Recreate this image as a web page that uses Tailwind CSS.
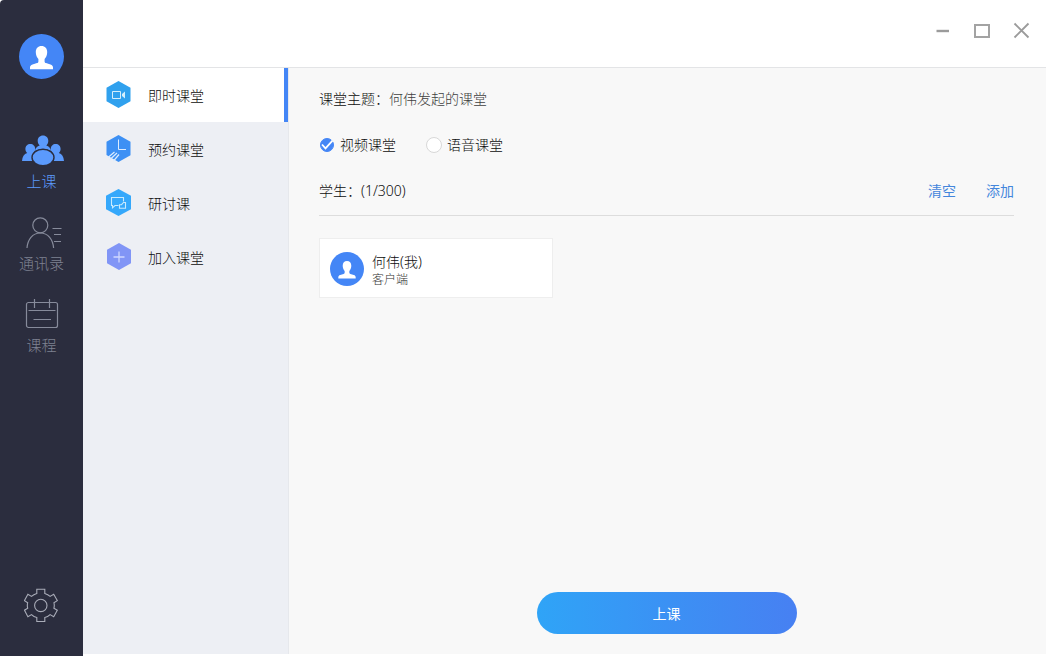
<!DOCTYPE html>
<html lang="zh-CN">
<head>
<meta charset="utf-8">
<meta name="viewport" content="width=device-width, initial-scale=1">
<title>即时课堂</title>
<script src="https://cdn.jsdelivr.net/npm/@tailwindcss/browser@4"></script>
</head>
<body class="flex h-screen overflow-hidden bg-white font-['Noto_Sans','Noto_Sans_CJK_SC',sans-serif] text-sm font-light text-[#0c0c0c]">
  <svg class="hidden" aria-hidden="true">
    <symbol id="avatar" viewBox="0 0 45 45">
      <circle cx="22.5" cy="22.5" r="22.5" fill="#4486f6"/>
      <path fill="#fff" d="M22.500 12c3.600 0 5.700 2.500 5.700 6.200 0 3-1.200 5.300-2.600 6.800v2.400c0 .9.500 1.400 1.400 1.700l4.500 1.300c1.700.5 2.500 1.600 2.500 3.200v1.600H11v-1.600c0-1.600.8-2.700 2.500-3.200l4.500-1.300c.9-.3 1.400-.8 1.400-1.700V25c-1.400-1.500-2.600-3.800-2.600-6.800 0-3.700 2.100-6.200 5.700-6.200z"/>
    </symbol>
  </svg>

  <aside class="flex w-[83px] shrink-0 flex-col items-center rounded-tl-sm bg-[#2b2d3e] pt-[34px] pb-8 text-[15px] leading-5">
    <button type="button" aria-label="个人资料"><svg class="size-[45px]"><use href="#avatar"/></svg></button>
    <nav class="mt-[54px] flex flex-1 flex-col items-center gap-6 text-[#7f8292]">
      <a href="#class" class="flex flex-col items-center gap-1 text-[#5b9afc]">
        <svg class="ml-[3px] h-[34px] w-[42px]" viewBox="0 -2 42 34" fill="currentColor">
          <path d="M21 .5c3.200 0 5.300 2.300 5.300 5.300 0 1.900-.8 3.600-2 4.600 2.700.8 4.300 2.500 4.800 5.600-2.300-1.400-5-2.100-8.100-2.100s-5.800.7-8.100 2.100c.5-3.100 2.100-4.800 4.800-5.600-1.200-1-2-2.700-2-4.600C15.700 2.800 17.800.5 21 .5z"/>
          <path d="M8.300 9c2.800 0 4.900 2.100 4.900 4.900 0 1.600-.7 3.200-1.800 4.200l1.200.6c-1.700 1.500-2.600 3.300-2.600 5.300 0 .7.100 1.300.3 2H0c.4-4.100 1.900-6.800 5.200-7.900-1.100-1-1.800-2.600-1.800-4.200C3.400 11.100 5.500 9 8.300 9z"/>
          <path d="M33.700 9c-2.800 0-4.900 2.100-4.900 4.900 0 1.600.7 3.200 1.800 4.200l-1.200.6c1.700 1.500 2.600 3.300 2.600 5.300 0 .7-.1 1.300-.3 2H42c-.4-4.100-1.900-6.800-5.200-7.900 1.100-1 1.800-2.600 1.800-4.200 0-2.800-2.100-4.900-4.900-4.900z"/>
          <ellipse cx="21" cy="22.500" rx="11" ry="8.300" stroke="#2b2d3e" stroke-width="1.400"/>
        </svg>
        上课
      </a>
      <a href="#contacts" class="flex flex-col items-center gap-1">
        <svg class="ml-1.5 h-[34px] w-[36px]" viewBox="0 -1 36 34" fill="none" stroke="#878b9b" stroke-width="1.200">
          <circle cx="14.300" cy="9.300" r="7.500"/>
          <path d="M1 32c.6-8.500 5.500-15 13.300-15S27 23.500 27.600 32M26.500 12.500h9M28 18.500h7M28 25.500h7"/>
        </svg>
        通讯录
      </a>
      <a href="#courses" class="flex flex-col items-center gap-1">
        <svg class="ml-0.5 h-[34px] w-[34px]" viewBox="0 0 34 34" fill="none" stroke="#878b9b" stroke-width="1.200">
          <rect x="1.500" y="5.500" width="31" height="25" rx="2"/>
          <path d="M9.500 2v9M24.500 2v9M3.500 13.500h27M8.500 22.500h17.500"/>
        </svg>
        课程
      </a>
    </nav>
    <button type="button" aria-label="设置">
      <svg class="size-9" viewBox="0 0 36 36" fill="none" stroke="#a9acb8" stroke-width="1.100">
        <circle cx="16.800" cy="17.400" r="6.200"/>
        <path d="M12.800 1.200h8v4.300c2 .6 3.800 1.500 5.300 2.900l3.600-2.100 3.600 6.300-3.400 2.100c.5 1.800.5 3.700 0 5.500l3.400 2-3.600 6.500-3.600-2.100c-1.500 1.400-3.300 2.400-5.300 2.900v4h-8v-4c-2-.5-3.800-1.500-5.300-2.900l-3.600 2.100-3.400-6.500 3.200-2c-.5-1.800-.5-3.700 0-5.500l-3.200-2.100 3.400-6.300 3.600 2.100c1.500-1.400 3.300-2.300 5.300-2.900z"/>
      </svg>
    </button>
  </aside>

  <div class="flex min-w-0 flex-1 flex-col">
    <header class="flex h-[68px] shrink-0 items-start justify-end gap-5 border-b border-[#e3e4e6] pt-5 pr-4 text-[#9b9b9b]">
      <button type="button" aria-label="最小化"><svg class="size-5" viewBox="0 0 20 20" stroke="currentColor" stroke-width="2.400"><path d="M4.500 11h12.500"/></svg></button>
      <button type="button" aria-label="最大化"><svg class="size-5" viewBox="0 0 20 20" fill="none" stroke="#a3a3a3" stroke-width="2"><path d="M3 5h14v12H3z"/></svg></button>
      <button type="button" aria-label="关闭"><svg class="h-5 w-[18px]" viewBox="0 0 18 20" stroke="currentColor" stroke-width="1.900"><path d="M2.500 3.500l14 14M16.500 3.500l-14 14"/></svg></button>
    </header>

    <div class="flex min-h-0 flex-1 border-b-2 border-white">
      <nav class="w-[206px] shrink-0 border-r border-[#e6e8ec] bg-[#edeff4]">
        <a href="#instant" class="flex h-[54px] items-center gap-4 border-r-4 border-[#4486f6] bg-white pb-px pl-[22px]">
          <svg class="size-[27px]" viewBox="0 0 27 27"><path fill="#30a1ee" d="M13.500 0l12 6.800v13.400l-12 6.800-12-6.800V6.800z"/><path fill="none" stroke="#d5effc" d="M7.500 10.500h8v7h-8z"/><path fill="#d5effc" d="M20 10.500v7l-3-2.500v-2z"/></svg>
          <span class="pt-[3px]">即时课堂</span>
        </a>
        <a href="#booking" class="flex h-[54px] items-center gap-4 pb-px pl-[22px]">
          <svg class="size-[27px]" viewBox="0 0 27 27"><path fill="#3d90f4" d="M13.500 0l12 6.800v13.400l-12 6.800-3-1.700L1.500 20V6.800z"/><g fill="none" stroke="#dcecff" stroke-width="1"><path d="M13.500 4.500v10H21"/><path stroke-width="1.200" d="M9.500 17L3 22.500M12 18l-7.500 7M14 19.500L8.500 26"/></g></svg>
          <span class="pt-[3px]">预约课堂</span>
        </a>
        <a href="#seminar" class="flex h-[54px] items-center gap-4 pb-px pl-[22px]">
          <svg class="size-[27px]" viewBox="0 0 27 27"><path fill="#35a8fb" d="M13.500 0L26 6.800v13.400L13.500 27 1 20.200V6.800z"/><path fill="none" stroke="#c9eafd" stroke-width="1.100" d="M13.500 16.500H10l-2.500 2.300v-2.300h-1V8.500h12v4M18.500 13.500h2v5.700h-6v-3.500h2z"/></svg>
          <span class="pt-[3px]">研讨课</span>
        </a>
        <a href="#join" class="flex h-[54px] items-center gap-4 pb-px pl-[22px]">
          <svg class="size-[27px]" viewBox="0 0 27 27"><path fill="#8195f6" d="M14 0l12 6.800v13.400L14 27 2 20.200V6.800z"/><path stroke="#cfd7ff" stroke-width="1.300" d="M14 8.500v11M8.500 14h11"/></svg>
          <span class="pt-[3px]">加入课堂</span>
        </a>
      </nav>

      <main class="flex min-w-0 flex-1 flex-col bg-[#f8f8f8] pt-[19px] pr-8 pb-5 pl-[30px] leading-5">
        <div class="flex h-6 items-center">
          <label for="topic">课堂主题：</label>
          <input id="topic" type="text" value="何伟发起的课堂" class="min-w-0 flex-1 bg-transparent text-[#404040] outline-none">
        </div>

        <div class="mt-[22px] flex h-6 items-center gap-[30px]">
          <label class="flex items-center gap-[5px]">
            <span class="grid size-4 place-items-center">
              <input type="radio" name="mode" checked class="peer col-start-1 row-start-1 size-4 appearance-none rounded-full border border-[#d8d8d8] bg-white checked:size-[14px] checked:border-[#4486f6] checked:bg-[#4486f6]">
              <svg class="pointer-events-none invisible col-start-1 row-start-1 size-[14px] peer-checked:visible" viewBox="0 0 14 14" fill="none" stroke="#fff" stroke-width="1.800"><path d="M2 6.500l3.500 3.800 7-7.600"/></svg>
            </span>
            视频课堂
          </label>
          <label class="flex items-center gap-[5px]">
            <span class="grid size-4 place-items-center">
              <input type="radio" name="mode" class="peer col-start-1 row-start-1 size-4 appearance-none rounded-full border border-[#d8d8d8] bg-white checked:size-[14px] checked:border-[#4486f6] checked:bg-[#4486f6]">
              <svg class="pointer-events-none invisible col-start-1 row-start-1 size-[14px] peer-checked:visible" viewBox="0 0 14 14" fill="none" stroke="#fff" stroke-width="1.800"><path d="M2 6.500l3.500 3.800 7-7.600"/></svg>
            </span>
            语音课堂
          </label>
        </div>

        <div class="mt-6 flex h-[35px] items-start gap-[30px] border-b border-[#dddddd]">
          <h2 class="flex-1">学生：(1/300)</h2>
          <button type="button" class="font-normal text-[#4486dc]">清空</button>
          <button type="button" class="font-normal text-[#4486dc]">添加</button>
        </div>

        <ul class="mt-[22px] flex flex-1 items-start">
          <li class="flex h-[60px] w-[234px] items-center gap-2 border border-[#eeeeee] bg-white px-[10px] pt-0.5">
            <svg class="size-[34px]"><use href="#avatar"/></svg>
            <div class="pt-0.5">
              <p class="leading-5">何伟(我)</p>
              <p class="text-xs leading-4 text-[#333333]">客户端</p>
            </div>
          </li>
        </ul>

        <button type="button" class="h-[42px] w-[260px] self-center rounded-full bg-linear-to-r/srgb from-[#2fa4f7] via-[#3b91f4] to-[#4780f2] pt-0.5 font-normal text-white">上课</button>
      </main>
    </div>
  </div>
</body>
</html>
